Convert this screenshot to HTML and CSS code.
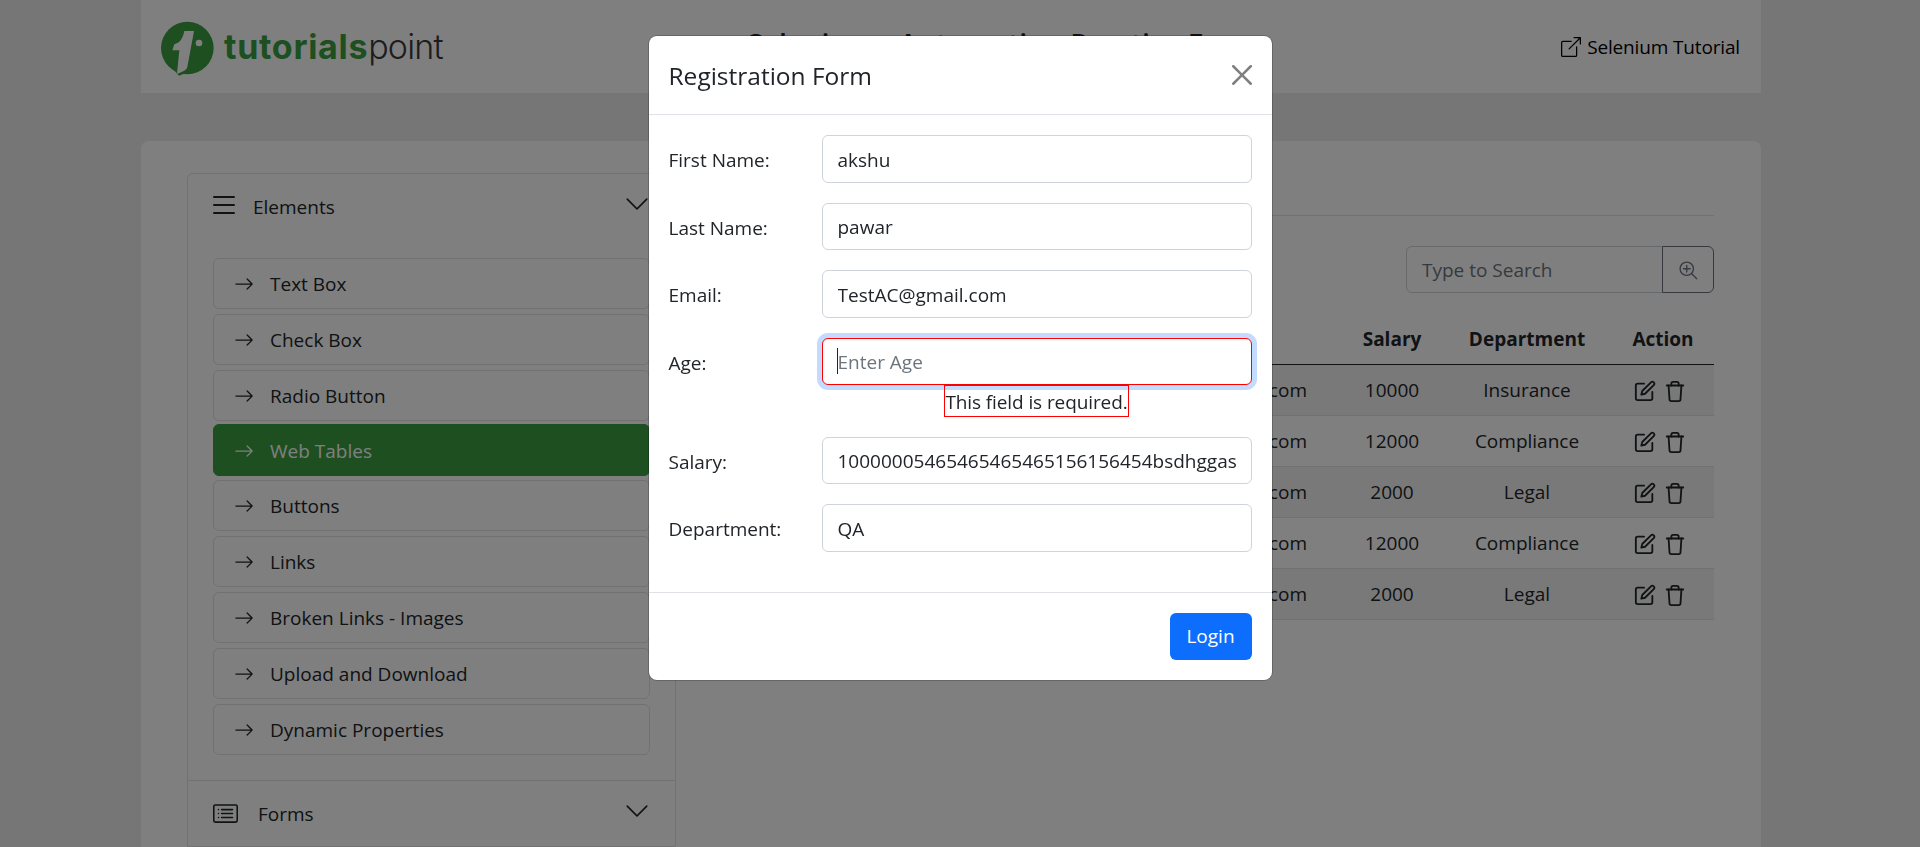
FILE: index.html
```html
<!DOCTYPE html>
<html lang="en">
<head>
    <meta charset="UTF-8">
    <meta name="viewport" content="width=device-width, initial-scale=1.0">
    <title>Selenium - Automation Practice Form</title>
    <link rel="stylesheet" href="styles.css">
</head>
<body>
    <svg class="icon-defs" aria-hidden="true">
        <symbol id="i-list" viewBox="0 0 16 16"><path fill="currentColor" d="M2.5 12a.5.5 0 0 1 .5-.5h10a.5.5 0 0 1 0 1H3a.5.5 0 0 1-.5-.5m0-4a.5.5 0 0 1 .5-.5h10a.5.5 0 0 1 0 1H3a.5.5 0 0 1-.5-.5m0-4a.5.5 0 0 1 .5-.5h10a.5.5 0 0 1 0 1H3a.5.5 0 0 1-.5-.5"/></symbol>
        <symbol id="i-arrow" viewBox="0 0 16 16"><path fill="currentColor" d="M1 8a.5.5 0 0 1 .5-.5h11.793l-3.147-3.146a.5.5 0 0 1 .708-.708l4 4a.5.5 0 0 1 0 .708l-4 4a.5.5 0 0 1-.708-.708L13.293 8.5H1.5A.5.5 0 0 1 1 8"/></symbol>
        <symbol id="i-chevron" viewBox="0 0 16 16"><path fill="currentColor" d="M1.646 4.646a.5.5 0 0 1 .708 0L8 10.293l5.646-5.647a.5.5 0 0 1 .708.708l-6 6a.5.5 0 0 1-.708 0l-6-6a.5.5 0 0 1 0-.708"/></symbol>
        <symbol id="i-card" viewBox="0 0 16 16"><path fill="currentColor" d="M14.5 3a.5.5 0 0 1 .5.5v9a.5.5 0 0 1-.5.5h-13a.5.5 0 0 1-.5-.5v-9a.5.5 0 0 1 .5-.5zm-13-1A1.5 1.5 0 0 0 0 3.5v9A1.5 1.5 0 0 0 1.5 14h13a1.5 1.5 0 0 0 1.5-1.5v-9A1.5 1.5 0 0 0 14.5 2z"/><path fill="currentColor" d="M5 8a.5.5 0 0 1 .5-.5h7a.5.5 0 0 1 0 1h-7A.5.5 0 0 1 5 8m0-2.5a.5.5 0 0 1 .5-.5h7a.5.5 0 0 1 0 1h-7a.5.5 0 0 1-.5-.5m0 5a.5.5 0 0 1 .5-.5h7a.5.5 0 0 1 0 1h-7a.5.5 0 0 1-.5-.5m-1-5a.5.5 0 1 1-1 0 .5.5 0 0 1 1 0M4 8a.5.5 0 1 1-1 0 .5.5 0 0 1 1 0m0 2.5a.5.5 0 1 1-1 0 .5.5 0 0 1 1 0"/></symbol>
        <symbol id="i-edit" viewBox="0 0 24 24"><g fill="none" stroke="currentColor" stroke-width="2" stroke-linecap="round" stroke-linejoin="round"><path d="M11 4H4a2 2 0 0 0-2 2v14a2 2 0 0 0 2 2h14a2 2 0 0 0 2-2v-7"/><path d="M18.5 2.5a2.121 2.121 0 0 1 3 3L12 15l-4 1 1-4 9.5-9.5z"/></g></symbol>
        <symbol id="i-trash" viewBox="0 0 24 24"><g fill="none" stroke="currentColor" stroke-width="2" stroke-linecap="round" stroke-linejoin="round"><path d="M3 6h18"/><path d="M19 6l-1 15a2 2 0 0 1-2 2H8a2 2 0 0 1-2-2L5 6"/><path d="M8 6V4a2 2 0 0 1 2-2h4a2 2 0 0 1 2 2v2"/></g></symbol>
    </svg>

    <div class="container">
        <header class="topbar">
            <a class="logo" href="#">
                <svg class="logo-mark" viewBox="0 0 210 180" aria-hidden="true">
                    <circle cx="97" cy="93" r="79" fill="#3a9f42"/>
                    <path fill="#3a9f42" d="M40 140 L72 176 L100 165z"/>
                    <path fill="#fff" d="M88 42H117L97 150C95 160 80 166 66 170L73 100H52L58 82C70 78 82 72 88 42Z"/>
                    <circle cx="132" cy="78" r="10" fill="#fff"/>
                </svg>
                <span class="logo-text"><b>tutorials</b><span class="logo-light">point</span></span>
            </a>
            <h1 class="page-title">Selenium - Automation Practice Form</h1>
            <a class="tutorial-link" href="#">
                <svg class="icon" viewBox="0 0 16 16" aria-hidden="true"><path fill="currentColor" d="M8.636 3.5a.5.5 0 0 0-.5-.5H1.5A1.5 1.5 0 0 0 0 4.5v10A1.5 1.5 0 0 0 1.5 16h10a1.5 1.5 0 0 0 1.5-1.5V7.864a.5.5 0 0 0-1 0V14.5a.5.5 0 0 1-.5.5h-10a.5.5 0 0 1-.5-.5v-10a.5.5 0 0 1 .5-.5h6.636a.5.5 0 0 0 .5-.5"/><path fill="currentColor" d="M16 .5a.5.5 0 0 0-.5-.5h-5a.5.5 0 0 0 0 1h3.793L6.146 9.146a.5.5 0 1 0 .708.708L15 1.707V5.5a.5.5 0 0 0 1 0z"/></svg>
                Selenium Tutorial
            </a>
        </header>

        <main class="panel">
            <aside class="accordion">
                <div class="acc-item">
                    <div class="acc-header">
                        <svg class="icon icon-list"><use href="#i-list"/></svg>
                        <span class="acc-title">Elements</span>
                        <svg class="icon chevron"><use href="#i-chevron"/></svg>
                    </div>
                    <ul class="menu">
                        <li class="menu-item"><svg class="icon"><use href="#i-arrow"/></svg>Text Box</li>
                        <li class="menu-item"><svg class="icon"><use href="#i-arrow"/></svg>Check Box</li>
                        <li class="menu-item"><svg class="icon"><use href="#i-arrow"/></svg>Radio Button</li>
                        <li class="menu-item active"><svg class="icon"><use href="#i-arrow"/></svg>Web Tables</li>
                        <li class="menu-item"><svg class="icon"><use href="#i-arrow"/></svg>Buttons</li>
                        <li class="menu-item"><svg class="icon"><use href="#i-arrow"/></svg>Links</li>
                        <li class="menu-item"><svg class="icon"><use href="#i-arrow"/></svg>Broken Links - Images</li>
                        <li class="menu-item"><svg class="icon"><use href="#i-arrow"/></svg>Upload and Download</li>
                        <li class="menu-item"><svg class="icon"><use href="#i-arrow"/></svg>Dynamic Properties</li>
                    </ul>
                </div>
                <div class="acc-item">
                    <div class="acc-header">
                        <svg class="icon icon-card"><use href="#i-card"/></svg>
                        <span class="acc-title">Forms</span>
                        <svg class="icon chevron"><use href="#i-chevron"/></svg>
                    </div>
                </div>
            </aside>

            <section class="content">
                <div class="content-rule"></div>
                <div class="search">
                    <input class="search-input" type="text" placeholder="Type to Search">
                    <button class="search-btn" type="button" aria-label="Search">
                        <svg class="icon" viewBox="0 0 24 24" aria-hidden="true"><g fill="none" stroke="currentColor" stroke-width="1.6" stroke-linecap="round"><circle cx="10.5" cy="10.5" r="8"/><path d="M10.5 6.5v8M6.5 10.5h8M16.5 16.5l6 6"/></g></svg>
                    </button>
                </div>
                <table class="data-table">
                    <colgroup>
                        <col class="col-email"><col class="col-salary"><col class="col-dept"><col class="col-action">
                    </colgroup>
                    <thead>
                        <tr><th></th><th>Salary</th><th>Department</th><th>Action</th></tr>
                    </thead>
                    <tbody>
                        <tr><td class="cell-email">cierra@example.com</td><td>10000</td><td>Insurance</td><td class="cell-action"><svg class="icon"><use href="#i-edit"/></svg><svg class="icon icon-trash"><use href="#i-trash"/></svg></td></tr>
                        <tr><td class="cell-email">alden@example.com</td><td>12000</td><td>Compliance</td><td class="cell-action"><svg class="icon"><use href="#i-edit"/></svg><svg class="icon icon-trash"><use href="#i-trash"/></svg></td></tr>
                        <tr><td class="cell-email">kierra@example.com</td><td>2000</td><td>Legal</td><td class="cell-action"><svg class="icon"><use href="#i-edit"/></svg><svg class="icon icon-trash"><use href="#i-trash"/></svg></td></tr>
                        <tr><td class="cell-email">alden@example.com</td><td>12000</td><td>Compliance</td><td class="cell-action"><svg class="icon"><use href="#i-edit"/></svg><svg class="icon icon-trash"><use href="#i-trash"/></svg></td></tr>
                        <tr><td class="cell-email">kierra@example.com</td><td>2000</td><td>Legal</td><td class="cell-action"><svg class="icon"><use href="#i-edit"/></svg><svg class="icon icon-trash"><use href="#i-trash"/></svg></td></tr>
                    </tbody>
                </table>
            </section>
        </main>
    </div>

    <div class="backdrop"></div>

    <div class="modal-wrap">
        <div class="modal">
            <div class="modal-header">
                <h5 class="modal-title">Registration Form</h5>
                <button class="modal-close" type="button" aria-label="Close">
                    <svg viewBox="0 0 16 16" aria-hidden="true"><path fill="currentColor" d="M.293.293a1 1 0 0 1 1.414 0L8 6.586 14.293.293a1 1 0 1 1 1.414 1.414L9.414 8l6.293 6.293a1 1 0 0 1-1.414 1.414L8 9.414l-6.293 6.293a1 1 0 0 1-1.414-1.414L6.586 8 .293 1.707a1 1 0 0 1 0-1.414"/></svg>
                </button>
            </div>
            <form class="modal-body">
                <div class="field">
                    <label for="firstName">First Name:</label>
                    <input id="firstName" type="text" value="akshu">
                </div>
                <div class="field">
                    <label for="lastName">Last Name:</label>
                    <input id="lastName" type="text" value="pawar">
                </div>
                <div class="field">
                    <label for="email">Email:</label>
                    <input id="email" type="text" value="TestAC@gmail.com">
                </div>
                <div class="field">
                    <label for="age">Age:</label>
                    <div class="field-control">
                        <input id="age" class="invalid" type="text" placeholder="Enter Age">
                        <span class="caret"></span>
                        <div class="error-wrap"><span class="error">This field is required.</span></div>
                    </div>
                </div>
                <div class="field">
                    <label for="salary">Salary:</label>
                    <input id="salary" type="text" value="10000005465465465465156156454bsdhggas">
                </div>
                <div class="field">
                    <label for="department">Department:</label>
                    <input id="department" type="text" value="QA">
                </div>
            </form>
            <div class="modal-footer">
                <button class="btn-login" type="button">Login</button>
            </div>
        </div>
    </div>
</body>
</html>
```

FILE: styles.css
```css
:root {
    --text-color: #212529;
    --border-color: #dee2e6;
    --input-border: #ced4da;
    --green: #3a9f42;
    --blue: #0d6efd;
}

* {
    box-sizing: border-box;
}

html, body {
    height: 100%;
    overflow: hidden;
}

body {
    margin: 0;
    padding-right: 18px;
    background-color: #ececec;
    color: var(--text-color);
    font-family: 'Open Sans', 'Noto Sans', sans-serif;
    font-size: 19px;
    line-height: 30px;
}

.icon-defs {
    display: none;
}

.icon {
    width: 20px;
    height: 20px;
    flex-shrink: 0;
}

.container {
    width: 1620px;
    margin: 0 auto;
}

/* top bar */
.topbar {
    display: flex;
    align-items: center;
    height: 93px;
    padding: 0 21px 0 20px;
    background: white;
}

.logo {
    display: flex;
    align-items: center;
    color: #3a3a3a;
    text-decoration: none;
}

.logo-mark {
    width: 70px;
    height: 60px;
    margin: 0 -1px 0 -6px;
}

.logo-text {
    font-family: Inter, sans-serif;
    font-size: 34px;
    font-weight: 300;
    line-height: 40px;
}

.logo-text b {
    color: var(--green);
    font-weight: 700;
    letter-spacing: 0.7px;
}

.logo-light {
    letter-spacing: -0.8px;
}

.page-title {
    margin: 0 0 6px 304px;
    font-size: 28.5px;
    font-weight: 600;
    line-height: 36px;
    color: var(--text-color);
    white-space: nowrap;
}

.tutorial-link {
    display: flex;
    align-items: center;
    gap: 6px;
    margin-left: auto;
    color: #000;
    letter-spacing: -0.15px;
    text-decoration: none;
}

/* main panel */
.panel {
    display: grid;
    grid-template-columns: 489px 1000px;
    gap: 38px;
    height: 706px;
    margin-top: 48px;
    padding: 32px 47px 0 46px;
    background: white;
    border-radius: 8px 8px 0 0;
}

.accordion {
    border: 1px solid var(--border-color);
    border-radius: 6px 6px 0 0;
}

.acc-item + .acc-item {
    border-top: 1px solid var(--border-color);
}

.acc-header {
    display: flex;
    align-items: center;
    height: 64px;
    padding: 0 25px;
}

.acc-title {
    margin: 1px 0 0 20px;
}

.chevron {
    width: 26px;
    height: 26px;
    margin-left: auto;
    margin-top: -5px;
}

.icon-list {
    width: 32px;
    height: 32px;
    margin: -3px -7px 0 -5px;
}

.icon-card {
    width: 25px;
    height: 25px;
}

.menu {
    display: flex;
    flex-direction: column;
    gap: 5px;
    margin: 0;
    padding: 20px 25px 25px;
    list-style: none;
}

.menu-item {
    display: flex;
    align-items: center;
    gap: 16px;
    height: 51px;
    padding: 1px 20px 0;
    border: 1px solid var(--border-color);
    border-radius: 6px;
}

.menu-item.active {
    height: 52px;
    margin: -2px 0 -1px;
    background-color: var(--green);
    border-color: var(--green);
    color: white;
}

/* web tables side */
.content-rule {
    height: 43px;
    border-bottom: 1px solid var(--border-color);
}

.search {
    display: flex;
    justify-content: flex-end;
    margin-top: 30px;
}

.search-input {
    width: 257px;
    height: 47px;
    padding: 1px 15px 0;
    border: 1px solid var(--input-border);
    border-radius: 6px 0 0 6px;
    font: inherit;
}

.search-input::placeholder {
    color: #6c757d;
}

.search-btn {
    display: flex;
    align-items: center;
    justify-content: center;
    width: 52px;
    height: 47px;
    margin-left: -1px;
    padding: 0;
    background: none;
    border: 1px solid #6c757d;
    border-radius: 0 6px 6px 0;
    color: #6c757d;
}

.data-table {
    width: 626px;
    margin: 20px 0 0 auto;
    border-collapse: collapse;
    table-layout: fixed;
    text-align: center;
}

.col-email { width: 254px; }
.col-salary { width: 100px; }
.col-dept { width: 170px; }
.col-action { width: 102px; }

.data-table th {
    height: 51px;
    padding: 2px 0 0;
    border-bottom: 1px solid var(--text-color);
    font-weight: 700;
}

.data-table td {
    height: 51px;
    padding: 0;
    border-bottom: 1px solid var(--border-color);
}

.data-table tbody tr:nth-child(odd) {
    background-color: rgba(0, 0, 0, 0.05);
}

.data-table .cell-email {
    padding-right: 35px;
    text-align: right;
}

.data-table .cell-action {
    padding-right: 7px;
}

.cell-action .icon {
    width: 22px;
    height: 22px;
    vertical-align: middle;
}

.cell-action .icon-trash {
    margin-left: 8px;
}

/* modal */
.backdrop {
    position: fixed;
    inset: 0;
    background-color: rgba(0, 0, 0, 0.5);
}

.modal-wrap {
    position: fixed;
    inset: 0;
    display: flex;
    justify-content: center;
    align-items: flex-start;
    padding-top: 36px;
}

.modal {
    width: 623px;
    background: white;
    border-radius: 8px;
    box-shadow: 0 0 0 1px rgba(0, 0, 0, 0.2);
}

.modal-header {
    display: flex;
    align-items: center;
    justify-content: space-between;
    height: 79px;
    padding: 0 20px;
    border-bottom: 1px solid var(--border-color);
}

.modal-title {
    margin: 2px 0 0;
    font-size: 24.5px;
    font-weight: 500;
    line-height: 32px;
}

.modal-close {
    width: 20px;
    height: 20px;
    padding: 0;
    background: none;
    border: none;
    color: #7f7f7f;
}

.modal-close svg {
    display: block;
    width: 20px;
    height: 20px;
}

.modal-body {
    display: block;
    padding: 20px;
}

.field {
    display: grid;
    grid-template-columns: 153px 430px;
    margin-bottom: 20px;
}

.field label {
    padding-top: 3px;
    line-height: 44.5px;
}

.field input {
    display: block;
    width: 100%;
    height: 47.5px;
    padding: 2px 15px 0;
    border: 1px solid var(--input-border);
    border-radius: 6px;
    color: var(--text-color);
    font: inherit;
}

.field-control {
    position: relative;
}

.field input.invalid {
    border-color: red;
    box-shadow: 0 0 0 5px #c2dbfe;
    outline: none;
}

.field input::placeholder {
    color: #6c757d;
}

.caret {
    position: absolute;
    top: 10px;
    left: 15px;
    width: 1px;
    height: 26px;
    background-color: var(--text-color);
}

.error-wrap {
    height: 31.5px;
    text-align: center;
}

.error {
    display: inline-block;
    height: 32px;
    border: 1px solid red;
    letter-spacing: -0.1px;
    line-height: 32px;
}

.modal-footer {
    display: flex;
    justify-content: flex-end;
    padding: 20px;
    border-top: 1px solid var(--border-color);
}

.btn-login {
    width: 82px;
    height: 47.5px;
    background-color: var(--blue);
    border: none;
    border-radius: 6px;
    color: white;
    font: inherit;
}
```
